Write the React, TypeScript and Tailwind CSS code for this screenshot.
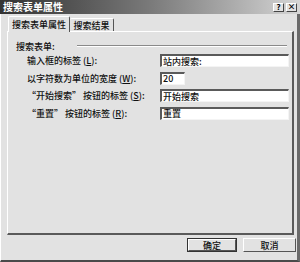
import React from "react";

const font = { fontFamily: '"Noto Sans CJK SC", "Liberation Sans", sans-serif' };

function Field({ value, wide = true }: { value: string; wide?: boolean }) {
  return (
    <div
      className={`h-[13px] ${wide ? "w-[129px]" : "w-[25px]"} bg-white border-t-2 border-l-2 border-t-[#5a5a5a] border-l-[#5a5a5a] border-r border-b border-r-[#f4f4f4] border-b-[#f4f4f4] flex items-center pl-[1px] text-[9px] font-medium leading-none text-[#111]`}
    >
      {value}
    </div>
  );
}

function Row({ label, value, wide = true }: { label: React.ReactNode; value: string; wide?: boolean }) {
  return (
    <div className="flex items-center h-[13px]">
      <div className="w-[133px] text-[9px] font-medium leading-none text-[#111] whitespace-nowrap">{label}</div>
      <Field value={value} wide={wide} />
    </div>
  );
}

function Btn({ children, def = false }: { children: React.ReactNode; def?: boolean }) {
  return (
    <div
      className={`h-[14px] ${def ? "w-[50px] border border-[#333]" : "w-[53px]"} flex`}
    >
      <div className="flex-1 flex items-center justify-center border-t border-l border-t-white border-l-white border-r border-b border-r-[#555] border-b-[#555] text-[9px] font-medium leading-none text-[#111]">
        {children}
      </div>
    </div>
  );
}

export default function App() {
  return (
    <div className="w-[300px] h-[262px] bg-[#e2e2e2] flex flex-col overflow-hidden" style={font}>
      <div className="h-[14px] bg-gradient-to-r from-[#333] via-[#7a7a7a] to-[#d6d6d6] flex items-center justify-between pl-[3px] pr-[3px]">
        <span className="text-white font-bold text-[10px] leading-none">搜索表单属性</span>
        <div className="flex gap-[2px]">
          <div className="w-[11px] h-[9px] bg-[#e2e2e2] border-t border-l border-white border-r border-b border-r-[#444] border-b-[#444] flex items-center justify-center text-[8px] font-bold leading-none text-black">?</div>
          <div className="w-[11px] h-[9px] bg-[#e2e2e2] border-t border-l border-white border-r border-b border-r-[#444] border-b-[#444] flex items-center justify-center text-[8px] font-bold leading-none text-black">×</div>
        </div>
      </div>
      <div className="flex-1 flex flex-col pl-[6px] pt-[2px] border-r-[3px] border-b-2 border-r-[#6a6a6a] border-b-[#4a4a4a] border-l border-l-white">
        <div className="h-[15px] flex items-end pl-[1px] relative z-10">
          <div className="w-[62px] h-[16px] -mb-[1px] bg-[#e2e2e2] border-t border-l border-white border-r border-r-[#555] rounded-t-[2px] flex items-center justify-center text-[9px] font-medium leading-none text-[#111]">
            搜索表单属性
          </div>
          <div className="w-[44px] h-[13px] border-t border-white border-r border-r-[#555] rounded-t-[2px] flex items-center justify-center text-[9px] font-medium leading-none text-[#111]">
            搜索结果
          </div>
        </div>
        <div className="w-[287px] h-[204px] border-t border-l border-t-white border-l-white border-r-2 border-b-2 border-r-[#5a5a5a] border-b-[#5a5a5a] flex flex-col pl-[8px] pt-[9px]">
          <div className="h-[10px] flex items-center pr-[5px]">
            <span className="text-[9px] font-medium leading-none text-[#111] whitespace-nowrap">搜索表单:</span>
            <div className="flex-1 ml-[22px] border-t border-t-[#8a8a8a] border-b border-b-white" />
          </div>
          <div className="flex flex-col gap-[4.5px] mt-[3px] pl-[11px]">
            <Row label={<>输入框的标签 (<u>L</u>):</>} value="站内搜索:" />
            <Row label={<>以字符数为单位的宽度 (<u>W</u>):</>} value="20" wide={false} />
            <Row label={<>“开始搜索” 按钮的标签 (<u>S</u>):</>} value="开始搜索" />
            <Row label={<>“重置” 按钮的标签 (<u>R</u>):</>} value="重置" />
          </div>
        </div>
        <div className="flex justify-end gap-[6px] mt-[3px] pr-[1px]">
          <Btn def>确定</Btn>
          <Btn>取消</Btn>
        </div>
      </div>
    </div>
  );
}
